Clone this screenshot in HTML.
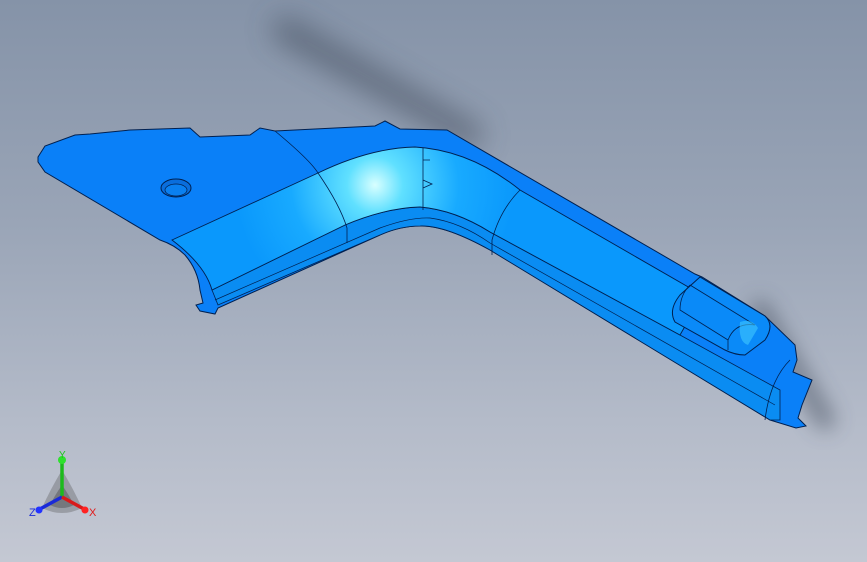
<!DOCTYPE html>
<html><head><style>
html,body{margin:0;padding:0;width:867px;height:562px;overflow:hidden}
body{background:linear-gradient(180deg,#8593a8 0%,#9aa5b7 40%,#b4bbc9 75%,#c4c8d3 100%)}
svg{position:absolute;left:0;top:0}
</style></head><body>
<svg width="867" height="562" viewBox="0 0 867 562">
<defs>
<filter id="b1" x="-50%" y="-50%" width="200%" height="200%"><feGaussianBlur stdDeviation="14"/></filter>
<filter id="b2" x="-50%" y="-50%" width="200%" height="200%"><feGaussianBlur stdDeviation="10"/></filter>
<radialGradient id="hl" cx="375" cy="185" r="140" gradientUnits="userSpaceOnUse">
<stop offset="0" stop-color="#d8ffff"/><stop offset="0.2" stop-color="#60e0ff"/><stop offset="0.6" stop-color="#18aaff"/><stop offset="1" stop-color="#0a98fc"/></radialGradient>
<linearGradient id="ch2" x1="0" y1="0" x2="0" y2="1"><stop offset="0" stop-color="#22c8ff"/><stop offset="1" stop-color="#0a8cf0"/></linearGradient>
</defs>
<path d="M285 30 L470 135" stroke="#3c4656" stroke-width="26" stroke-linecap="round" opacity="0.55" filter="url(#b1)"/>
<path d="M760 310 L825 420" stroke="#3c4656" stroke-width="20" stroke-linecap="round" opacity="0.5" filter="url(#b2)"/>
<path d="M38 157 L45 146 L75 135 L90 134 L130 130 L190 128 L200 137 L250 135 L260 128 L275 131 L375 126 L385 121 L400 129 L447 130 L695 274 L702 277 L765 316 L795 345 L797 360 L793 372 L812 380 L802 405 L798 418 L806 426 L796 428 L770 420 L490 250 Q445 225 420 226 Q400 226 380 235 L218 308 L215 314 L200 311 L196 305 L203 303 L200 290 Q198 270 185 255 Q175 245 160 240 L45 172 L38 162 Z" fill="#0a80f8" stroke="#002050" stroke-width="1"/>
<path d="M212 290 L345 225 Q385 208 420 207 Q455 210 490 232 L680 335 L780 390 L780 420 L770 420 L490 250 Q445 225 420 226 Q400 226 380 235 L218 305 Z" fill="#0a8cf2" stroke="#002050" stroke-width="0.8"/>
<path d="M172 240 L318 173 Q370 148 415 147 Q470 150 520 190 L690 288 L700 300 L680 335 L490 232 Q455 210 420 207 Q385 208 345 225 L212 290 Q205 265 172 240 Z" fill="url(#hl)" stroke="#002050" stroke-width="0.9"/>
<path d="M215 300 L380 228 Q410 217 430 218 Q460 222 490 243 L775 405" fill="none" stroke="#002050" stroke-width="0.7"/>
<path d="M275 131 Q310 160 318 173 Q340 205 347 228 L347 243" fill="none" stroke="#002050" stroke-width="0.8"/>
<path d="M423 148 L423 210 M423 160 L430 160 M423 180 L432 184 L423 188" fill="none" stroke="#002050" stroke-width="0.8"/>
<path d="M520 190 Q500 210 492 240 L492 255" fill="none" stroke="#002050" stroke-width="0.8"/>
<ellipse cx="176" cy="188" rx="15" ry="9" fill="#0a6edc" stroke="#002050" stroke-width="1"/>
<ellipse cx="176" cy="190" rx="11" ry="6" fill="#0a80f0" stroke="#002050" stroke-width="0.7"/>
<path d="M700 277 L765 316 Q775 325 765 340 L745 355 Q735 355 725 350 L675 322 Q668 310 680 295 Z" fill="#0a8af8" stroke="#002050" stroke-width="1"/>
<path d="M690 285 L755 325 Q735 322 728 340 L728 350 M690 285 Q680 295 680 310 L728 340" fill="none" stroke="#002050" stroke-width="0.8"/>
<path d="M740 322 Q752 318 758 328 L748 345 Q738 342 740 322 Z" fill="#40c8ff" opacity="0.6"/>
<path d="M790 360 Q770 380 765 420" fill="none" stroke="#002050" stroke-width="0.8"/>
<g>
<path d="M62 470 Q50 490 42 508 Q62 518 82 508 Q74 490 62 470 Z" fill="#555" opacity="0.35"/>
<path d="M62 485 Q55 495 50 505 Q62 511 74 505 Q69 495 62 485Z" fill="#333" opacity="0.35"/>
<line x1="62" y1="497" x2="62" y2="462" stroke="#1cba1c" stroke-width="3.5"/>
<circle cx="62" cy="460" r="4" fill="#2ee02e"/>
<line x1="62" y1="497" x2="40" y2="509" stroke="#1a2ad8" stroke-width="3.5"/>
<circle cx="39" cy="510" r="3.5" fill="#2233ff"/>
<line x1="62" y1="497" x2="84" y2="509" stroke="#d81a1a" stroke-width="3.5"/>
<circle cx="85" cy="510" r="3.5" fill="#ff2222"/>
<text x="59" y="458" font-family="Liberation Sans,sans-serif" font-size="10" fill="#1cc41c">Y</text>
<text x="29" y="516" font-family="Liberation Sans,sans-serif" font-size="11" fill="#1a2ad8">Z</text>
<text x="89" y="516" font-family="Liberation Sans,sans-serif" font-size="11" fill="#e01a1a">X</text>
</g>
</svg>
</body></html>
